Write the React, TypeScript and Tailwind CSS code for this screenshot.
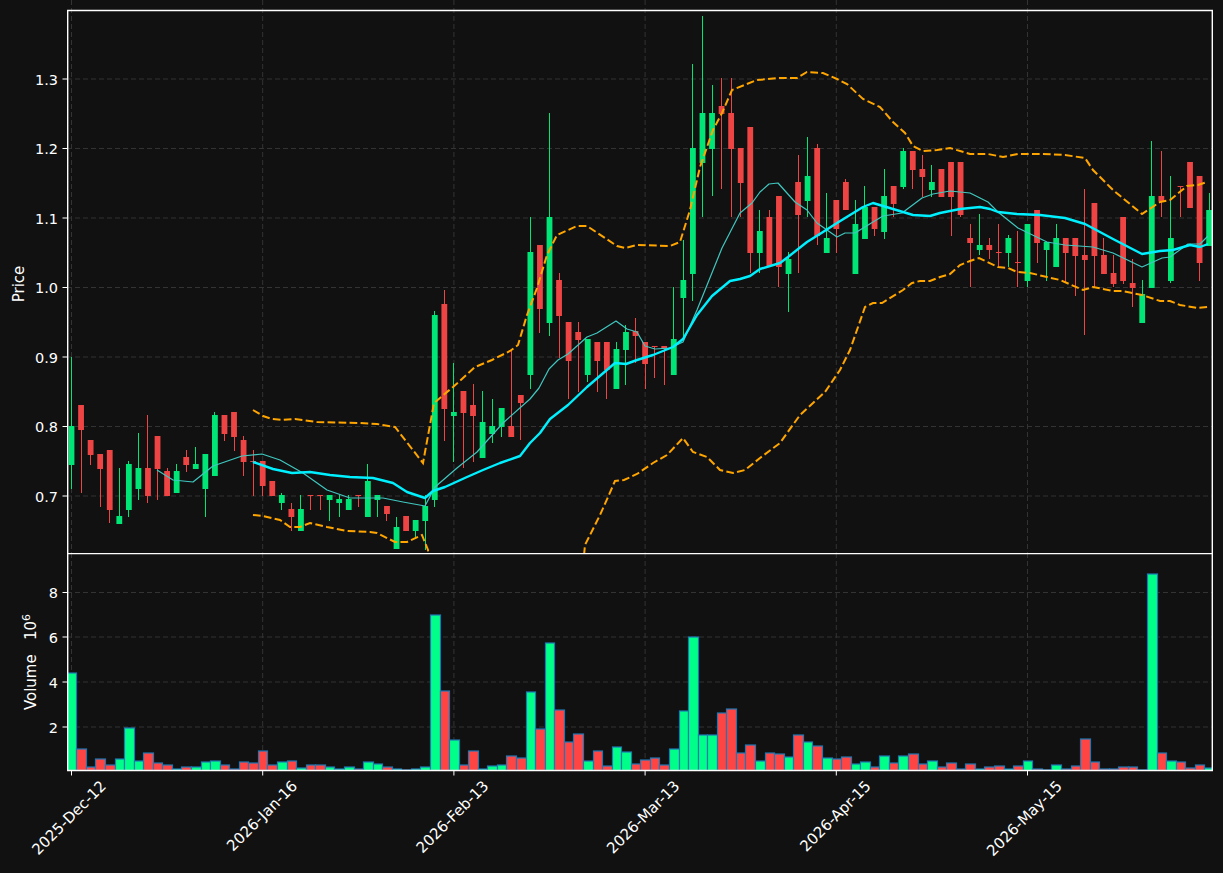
import React from 'react';

// [up, high, bodyTop, bodyBottom, low, volumeTop] in picture pixels
type Bar = [number, number, number, number, number, number];

const bars: Bar[] = [
  [1, 357, 426, 465, 489, 673], [0, 405, 405, 430, 493, 749], [0, 440, 440, 455, 465, 767], [0, 454, 454, 469, 507, 759],
  [0, 450, 450, 510, 523, 765], [1, 468, 516, 524, 524, 759], [1, 461, 464, 510, 517, 728], [1, 433, 468, 489, 500, 761],
  [0, 415, 468, 496, 503, 753], [0, 436, 436, 469, 500, 763], [0, 468, 471, 496, 496, 765], [1, 464, 471, 493, 493, 769],
  [0, 450, 457, 465, 472, 767], [1, 447, 464, 469, 469, 767], [1, 454, 454, 489, 517, 762], [1, 412, 415, 476, 476, 761],
  [0, 415, 415, 434, 441, 765], [0, 412, 412, 437, 451, 769], [0, 436, 440, 462, 476, 762], [0, 450, 461, 462, 496, 763],
  [0, 461, 461, 486, 496, 751], [0, 481, 481, 496, 496, 765], [1, 493, 495, 503, 510, 762], [0, 503, 509, 517, 531, 761],
  [1, 495, 509, 531, 531, 768], [0, 495, 495, 496, 510, 765], [0, 495, 495, 496, 510, 765], [1, 495, 495, 500, 521, 767],
  [1, 495, 499, 503, 517, 769], [1, 495, 499, 510, 510, 767], [0, 495, 495, 496, 507, 769], [1, 464, 481, 517, 517, 762],
  [1, 495, 495, 500, 517, 764], [0, 506, 506, 514, 521, 767], [1, 517, 527, 549, 549, 769], [0, 516, 516, 531, 531, 770],
  [1, 520, 520, 531, 538, 769], [1, 495, 506, 521, 550, 767], [1, 311, 315, 500, 507, 615], [0, 290, 304, 409, 441, 691],
  [1, 363, 412, 416, 462, 740], [0, 391, 391, 413, 468, 765], [0, 384, 405, 416, 462, 751], [1, 391, 422, 458, 458, 769],
  [1, 399, 426, 434, 443, 766], [1, 408, 408, 427, 437, 765], [0, 350, 426, 437, 437, 756], [0, 395, 395, 403, 440, 758],
  [1, 217, 252, 375, 389, 692], [0, 245, 245, 309, 333, 729], [1, 113, 217, 323, 336, 643], [0, 273, 280, 316, 358, 710],
  [0, 322, 322, 361, 399, 742], [0, 322, 332, 340, 392, 734], [1, 339, 339, 375, 382, 761], [0, 342, 342, 361, 392, 751],
  [0, 342, 342, 370, 399, 766], [1, 342, 349, 389, 389, 747], [1, 325, 332, 350, 385, 752], [0, 318, 331, 336, 363, 764],
  [0, 342, 342, 364, 389, 760], [0, 346, 346, 347, 378, 758], [0, 346, 346, 349, 385, 765], [1, 287, 339, 375, 375, 749],
  [1, 240, 280, 298, 337, 711], [1, 64, 148, 274, 301, 637], [1, 16, 113, 163, 217, 735], [1, 85, 113, 149, 196, 735],
  [0, 78, 106, 114, 189, 713], [0, 78, 113, 149, 217, 709], [0, 148, 148, 183, 217, 753], [0, 127, 127, 253, 273, 745],
  [1, 210, 231, 253, 273, 761], [0, 210, 217, 266, 266, 753], [0, 196, 196, 267, 287, 754], [1, 252, 259, 274, 312, 757],
  [0, 155, 182, 215, 273, 735], [1, 137, 176, 201, 217, 742], [0, 144, 148, 236, 245, 746], [1, 193, 238, 253, 253, 758],
  [0, 200, 200, 229, 253, 759], [0, 179, 182, 210, 210, 757], [1, 200, 224, 274, 274, 764], [1, 186, 207, 239, 239, 762],
  [0, 207, 207, 229, 236, 767], [1, 169, 196, 232, 239, 756], [0, 186, 186, 204, 217, 763], [1, 148, 151, 187, 189, 756],
  [0, 151, 151, 170, 189, 754], [0, 155, 169, 177, 197, 764], [1, 165, 182, 190, 197, 761], [0, 169, 169, 197, 197, 767],
  [0, 162, 162, 197, 236, 763], [0, 162, 162, 215, 217, 769], [0, 224, 238, 243, 287, 764], [1, 214, 245, 250, 255, 769],
  [0, 238, 245, 250, 259, 767], [0, 224, 252, 253, 267, 766], [1, 235, 238, 253, 267, 769], [0, 231, 262, 263, 287, 766],
  [1, 224, 224, 281, 287, 761], [0, 210, 210, 243, 263, 769], [1, 242, 242, 250, 281, 770], [1, 224, 238, 267, 267, 765],
  [0, 238, 238, 253, 282, 769], [0, 238, 238, 256, 296, 766], [0, 189, 255, 260, 335, 739], [0, 203, 203, 256, 287, 762],
  [0, 238, 255, 274, 274, 769], [0, 255, 273, 284, 287, 769], [0, 217, 217, 281, 284, 767], [0, 259, 283, 288, 307, 767],
  [1, 280, 294, 323, 323, 770], [1, 141, 196, 288, 288, 574], [0, 151, 196, 201, 217, 753], [1, 176, 238, 281, 283, 761],
  [0, 186, 186, 187, 217, 762], [0, 162, 162, 208, 208, 768], [0, 176, 176, 263, 281, 765], [1, 193, 210, 246, 246, 768],
];

const upperBand = '253,410 263,416 272,419 282,420 295,419 317,422 360,423 377,424 395,427 423,463 434,403 453,387 463,378 475,367 492,360 510,351 518,345 527,315 537,288 547,255 557,235 577,226 587,226 617,246 625,248 637,245 670,246 680,242 690,210 700,167 713,130 722,113 732,90 757,80 780,78 797,78 807,72 823,73 837,79 847,84 863,99 880,107 893,122 905,133 913,146 923,151 937,150 950,148 970,154 988,154 1003,157 1018,154 1043,154 1065,155 1085,158 1093,170 1113,190 1142,214 1160,202 1170,200 1187,186 1198,185 1207,182';
const lowerBand = '253,515 263,516 280,520 290,527 300,527 310,523 327,527 347,531 370,532 377,533 395,542 407,542 422,535 428,550 436,650 575,650 585,545 600,515 608,497 615,481 624,480 637,474 653,463 667,455 683,438 693,452 707,457 720,470 733,473 745,470 760,458 780,443 800,415 825,392 840,370 850,350 865,307 873,303 882,303 903,290 912,283 920,281 930,281 940,277 950,274 960,265 970,261 979,258 998,267 1008,268 1017,272 1030,273 1047,277 1060,280 1083,290 1093,287 1113,291 1122,291 1142,295 1160,301 1170,301 1180,305 1198,308 1208,307';
const slowAvg = '253,462 273,469 292,473 310,472 330,475 350,477 373,478 393,483 407,492 425,498 433,491 445,487 467,477 483,470 500,463 520,456 530,443 540,433 550,419 568,405 587,387 615,363 626,364 637,360 653,355 673,347 683,339 697,315 712,296 730,281 740,279 750,276 760,269 780,263 788,257 807,242 823,232 837,223 863,207 873,203 893,209 913,215 930,216 940,213 960,209 980,207 990,209 998,212 1017,214 1040,215 1065,218 1085,224 1113,239 1142,254 1160,251 1173,250 1190,245 1200,247 1208,244';
const fastAvg = '157,470 173,480 193,482 213,466 242,456 262,454 280,460 303,473 327,490 350,498 383,498 403,502 425,506 435,487 457,468 477,452 503,423 530,399 539,388 549,369 558,360 568,354 587,337 597,333 616,321 627,329 637,332 645,346 655,349 670,348 683,342 697,310 722,248 740,213 752,203 760,192 769,184 778,183 795,202 807,210 817,223 837,237 845,233 855,233 873,222 883,216 902,213 922,198 933,194 950,191 970,193 988,202 998,212 1018,228 1047,242 1065,245 1093,247 1113,253 1142,267 1162,258 1170,257 1188,244 1200,244 1208,236';

const ticks = [
  { i: 0, label: '2025-Dec-12' },
  { i: 20, label: '2026-Jan-16' },
  { i: 40, label: '2026-Feb-13' },
  { i: 60, label: '2026-Mar-13' },
  { i: 80, label: '2026-Apr-15' },
  { i: 100, label: '2026-May-15' },
];
const priceTicks = [
  { y: 79, label: '1.3' }, { y: 148.5, label: '1.2' }, { y: 218, label: '1.1' },
  { y: 287.5, label: '1.0' }, { y: 357, label: '0.9' }, { y: 426.5, label: '0.8' }, { y: 496, label: '0.7' },
];
const volumeTicks = [
  { y: 39.5, label: '8' }, { y: 84, label: '6' }, { y: 129, label: '4' }, { y: 174, label: '2' },
];

const barX = (i: number) => 71.5 + i * 9.56;

const Grid = ({ ys, bottom }: { ys: number[]; bottom: number }) => (
  <g stroke="#333333" strokeWidth={1} strokeDasharray="5 3">
    {ticks.map(t => <line key={t.i} x1={barX(t.i)} x2={barX(t.i)} y1={0} y2={bottom} />)}
    {ys.map(y => <line key={y} x1={67} x2={1212} y1={y} y2={y} />)}
  </g>
);

const YAxis = ({ items }: { items: { y: number; label: string }[] }) => (
  <g>
    {items.map(t => (
      <g key={t.label}>
        <line x1={62.5} x2={67} y1={t.y} y2={t.y} stroke="#ffffff" strokeWidth={1} />
        <text x={58} y={t.y + 5.5} textAnchor="end" fill="#ffffff" fontSize={14.5}>{t.label}</text>
      </g>
    ))}
  </g>
);

const PricePanel = () => (
  <svg viewBox="0 0 1223 553" className="block h-[553px] w-[1223px] shrink-0">
    <Grid ys={priceTicks.map(t => t.y)} bottom={553} />
    {bars.map(([up, high, top, bottom, low], i) => {
      const color = up ? '#00e676' : '#ef4444';
      return (
        <g key={i} fill={color}>
          <rect x={Math.round(barX(i) - 0.5)} y={high} width={1} height={low - high} />
          <rect x={barX(i) - 2.9} y={top} width={5.8} height={Math.max(bottom - top, 1)} />
        </g>
      );
    })}
    <polyline points={fastAvg} fill="none" stroke="#40c8c0" strokeWidth={1.2} strokeLinejoin="round" />
    <polyline points={slowAvg} fill="none" stroke="#00f0ff" strokeWidth={2.4} strokeLinejoin="round" />
    <polyline points={upperBand} fill="none" stroke="#ffa500" strokeWidth={2} strokeDasharray="7.7 3.3" />
    <polyline points={lowerBand} fill="none" stroke="#ffa500" strokeWidth={2} strokeDasharray="7.7 3.3" />
    <YAxis items={priceTicks} />
    <text transform="translate(24 284) rotate(-90)" textAnchor="middle" fill="#ffffff" fontSize={15}>Price</text>
    <path d="M67.7 553V10.5H1212.3V553" fill="none" stroke="#ffffff" strokeWidth={1.4} />
  </svg>
);

const VolumePanel = () => (
  <svg viewBox="0 553 1223 320" className="block h-[320px] w-[1223px] shrink-0">
    <g transform="translate(0 553)">
      <Grid ys={volumeTicks.map(t => t.y)} bottom={217} />
    </g>
    <clipPath id="volume-area">
      <rect x={67.5} y={553} width={1144.5} height={217.5} />
    </clipPath>
    <g clipPath="url(#volume-area)" stroke="#1f77b4" strokeWidth={1.2}>
      {bars.map(([up, , , , , volumeTop], i) => {
        const left = Math.round(barX(i) - 4.78);
        const right = Math.round(barX(i) + 4.78);
        return (
          <rect
            key={i}
            x={left + 0.5}
            y={volumeTop}
            width={right - left}
            height={770.5 - volumeTop}
            fill={up ? '#00ff88' : '#ff4444'}
          />
        );
      })}
    </g>
    <g transform="translate(0 553)">
      <YAxis items={volumeTicks} />
    </g>
    <text transform="translate(36 662) rotate(-90)" textAnchor="middle" fill="#ffffff" fontSize={15}>
      {'Volume\u00a0\u00a0\u00a010'}<tspan dy={-6} fontSize={11}>6</tspan>
    </text>
    {ticks.map(t => (
      <g key={t.i}>
        <line x1={barX(t.i)} x2={barX(t.i)} y1={770.5} y2={775.5} stroke="#ffffff" strokeWidth={1} />
        <text
          transform={`translate(${barX(t.i) + 35.5} 787) rotate(-45)`}
          textAnchor="end"
          fill="#ffffff"
          fontSize={15}
        >
          {t.label}
        </text>
      </g>
    ))}
    <path d="M67.7 770.5V553.5H1212.3V770.5Z" fill="none" stroke="#ffffff" strokeWidth={1.4} />
  </svg>
);

export default function App() {
  return (
    <div className="flex h-[873px] w-[1223px] flex-col overflow-hidden bg-[#111111] font-['DejaVu_Sans']">
      <PricePanel />
      <VolumePanel />
    </div>
  );
}
